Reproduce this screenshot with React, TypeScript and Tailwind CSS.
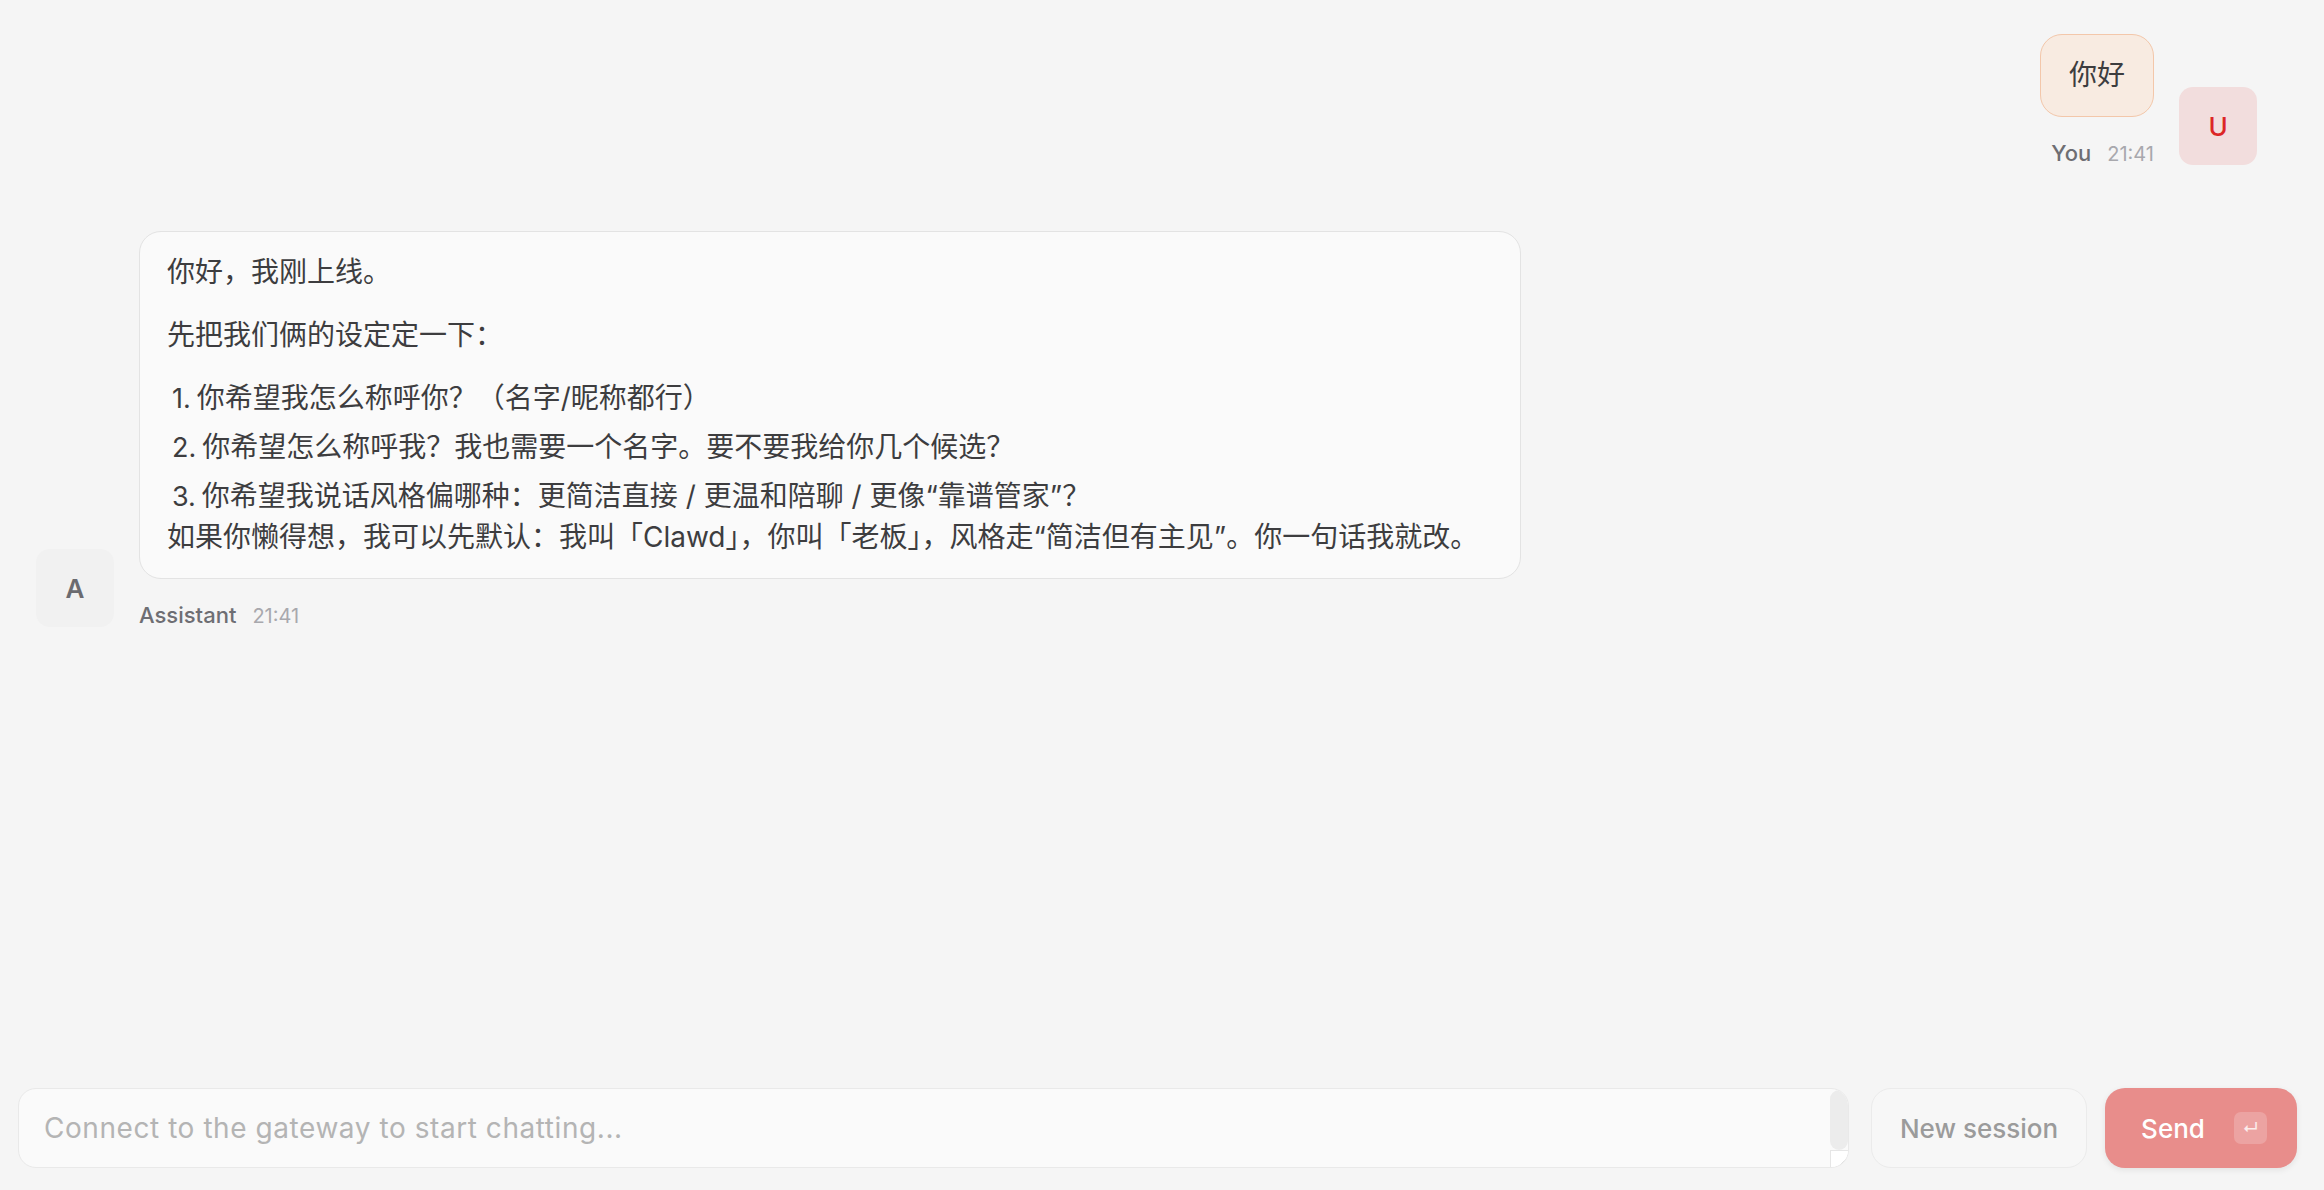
import { useState } from "react";

type Message = {
  id: string;
  role: "user" | "assistant";
  time: string;
};

const font = "font-['Inter','Noto_Sans_CJK_SC',sans-serif]";

const items = [
  "你希望我怎么称呼你？（名字/昵称都行）",
  "你希望怎么称呼我？我也需要一个名字。要不要我给你几个候选？",
  "你希望我说话风格偏哪种：更简洁直接 / 更温和陪聊 / 更像“靠谱管家”？",
];

function Avatar({ role }: { readonly role: Message["role"] }) {
  if (role === "user") {
    return (
      <div className="flex h-[78px] w-[78px] shrink-0 items-center justify-center rounded-[14px] bg-[#f2dddd] text-[26px] font-medium text-[#dc2626]">
        U
      </div>
    );
  }
  return (
    <div className="flex h-[78px] w-[78px] shrink-0 items-center justify-center rounded-[14px] bg-[#f1f1f1] text-[26px] font-semibold text-[#6b6b70]">
      A
    </div>
  );
}

function Meta({ name, time }: { readonly name: string; readonly time: string }) {
  return (
    <div className="mt-[25px] flex items-baseline gap-[16px] leading-[22px]">
      <span className="text-[22px] font-medium text-[#6e6e73]">{name}</span>
      <span className="text-[20px] text-[#a8a8ad]">{time}</span>
    </div>
  );
}

function AssistantReply() {
  return (
    <div className="w-[1382px] rounded-[22px] border border-[#e3e3e3] bg-[#fafafa] px-[27px] py-[20px] text-[28px] leading-[41px] text-[#3d3d3f]">
      <p className="mb-[22px]">你好，我刚上线。</p>
      <p className="mb-[22px]">先把我们俩的设定定一下：</p>
      <ol className="flex flex-col gap-[8px] pl-[5px]">
        {items.map((item, i) => (
          <li key={item}>
            <span className="mr-[6px] text-[27px]">{i + 1}.</span>
            {item}
          </li>
        ))}
      </ol>
      <p>
        如果你懒得想，我可以先默认：我叫「Clawd」，你叫「老板」，风格走“简洁但有主见”。你一句话我就改。
      </p>
    </div>
  );
}

function Composer() {
  const [draft, setDraft] = useState("");

  return (
    <div className="flex shrink-0 items-stretch pb-[22px] pl-[18px] pr-[27px]">
      <div className="flex h-[80px] flex-1 overflow-hidden rounded-[18px] border border-[#e9e9e9] bg-[#fafafa]">
        <textarea
          rows={1}
          value={draft}
          onChange={(e) => setDraft(e.target.value)}
          placeholder="Connect to the gateway to start chatting..."
          className="flex-1 resize-none bg-transparent px-[25px] py-[21px] text-[28px] leading-[36px] tracking-[0.02em] text-[#333] outline-none placeholder:text-[#b4b4b4]"
        />
        <div className="flex w-[18px] flex-col">
          <div className="mt-[1px] flex-1 rounded-full bg-[#ececec]" />
          <div className="flex h-[17px] items-end justify-end border-l border-t border-[#e6e6e6] bg-white">
            <svg width="12" height="12" viewBox="0 0 12 12" fill="none">
              <path d="M11 4 L4 11 M11 8 L8 11" stroke="#8a8a8a" strokeWidth="1.4" strokeLinecap="round" />
            </svg>
          </div>
        </div>
      </div>

      <button className="ml-[22px] h-[80px] w-[216px] rounded-[20px] border border-[#ebebeb] bg-[#f7f7f7] text-[26px] font-medium text-[#9b9b9b]">
        New session
      </button>

      <button className="ml-[18px] flex h-[80px] w-[192px] items-center justify-center gap-[29px] rounded-[20px] bg-[#e88d8b] pl-[6px] text-[26px] font-medium text-white shadow-[0_2px_6px_rgba(0,0,0,0.08)]">
        <span>Send</span>
        <span className="flex h-[32px] w-[33px] items-center justify-center rounded-[7px] bg-white/20 text-[16px] text-white/80">
          ↵
        </span>
      </button>
    </div>
  );
}

export default function App() {
  return (
    <div className={`flex h-screen flex-col bg-[#f5f5f5] ${font}`}>
      <main className="flex flex-1 flex-col gap-[66px] overflow-hidden pl-[36px] pr-[67px] pt-[34px]">
        <div className="flex items-end justify-end gap-[25px]">
          <div className="flex flex-col items-end">
            <div className="rounded-[22px] border border-[#f3c7aa] bg-[#f8ebe1] px-[28px] py-[20px] text-[28px] leading-[41px] text-[#3d3d3f]">
              你好
            </div>
            <Meta name="You" time="21:41" />
          </div>
          <Avatar role="user" />
        </div>

        <div className="flex items-end gap-[25px]">
          <Avatar role="assistant" />
          <div className="flex flex-col items-start">
            <AssistantReply />
            <Meta name="Assistant" time="21:41" />
          </div>
        </div>
      </main>

      <Composer />
    </div>
  );
}
